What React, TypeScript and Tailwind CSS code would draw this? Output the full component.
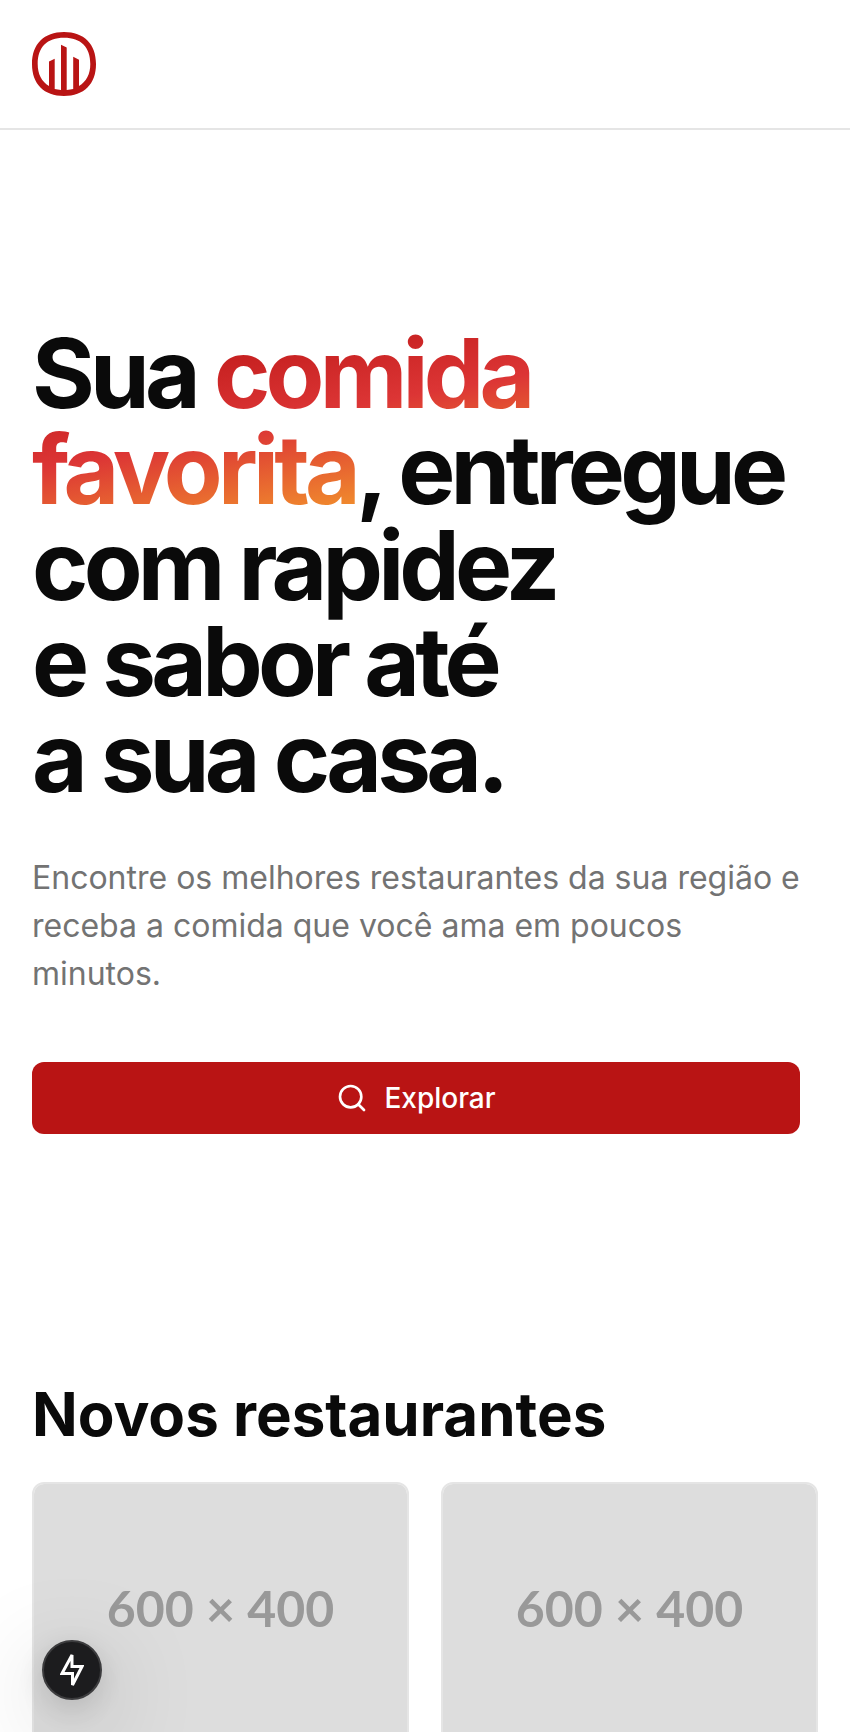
import { Search } from "lucide-react";

function Logo() {
  return (
    <svg viewBox="0 0 64 64" className="size-16" fill="#b91414" aria-hidden="true">
      <path
        fillRule="evenodd"
        d="M32 0C52 0 64 12 64 32S52 64 32 64 0 52 0 32 12 0 32 0ZM32 5.700C15 5.700 5.700 15 5.700 32C5.700 42 9.500 49.500 17 54V29.500L22.700 26.700V57Q25.500 57.700 29 57.900V12.700L34.700 15.500V57.900Q38.500 57.700 41.200 57V24.700L47 27.700V54C54.500 49.500 58.300 42 58.300 32C58.300 15 49 5.700 32 5.700Z"
      />
    </svg>
  );
}

function Bolt() {
  return (
    <svg viewBox="0 0 24 32" className="h-8 w-6" fill="none" stroke="#fff" strokeWidth="3" aria-hidden="true">
      <path d="M12 1V12.500H22L12.500 31V19.500H2L12 1Z" />
    </svg>
  );
}

function RestaurantCard() {
  return (
    <article className="overflow-hidden rounded-xl border-2 border-[#e5e5e5] pb-8">
      <div className="flex aspect-[3/2] items-center justify-center bg-[#ddd] font-['Lato',sans-serif] text-[50px] font-bold text-[#999]">
        600 × 400
      </div>
    </article>
  );
}

export default function App() {
  return (
    <div className="h-screen overflow-y-auto bg-white font-['Inter',sans-serif] text-[#0a0a0a] [scrollbar-width:none]">
      <header className="border-b-2 border-[#e5e5e5] px-8 py-8">
        <a href="#" aria-label="Início" className="block w-16">
          <Logo />
        </a>
      </header>
      <main className="px-8 pb-16">
        <section className="max-w-3xl pt-[195px] pb-61">
          <h1 className="text-8xl leading-none font-bold tracking-tighter">
            Sua{" "}
            <span className="bg-linear-to-br/srgb from-[#b91414] via-[#dc3535] to-[#f59e2b] bg-clip-text text-transparent">
              comida favorita
            </span>
            , entregue com rapidez
            <br />e sabor até
            <br />a sua casa.
          </h1>
          <p className="mt-[49px] text-[32px] leading-12 text-[#737373]">
            Encontre os melhores restaurantes da sua região e receba a comida que você ama em poucos minutos.
          </p>
          <button
            type="button"
            className="mt-16 flex h-18 w-full items-center justify-center gap-4 rounded-xl bg-[#b91414] text-[28px] leading-10 font-medium text-white"
          >
            <Search className="size-8" />
            Explorar
          </button>
        </section>
        <section>
          <h2 className="text-6xl leading-18 font-bold">Novos restaurantes</h2>
          <div className="mt-8 grid grid-cols-2 gap-8">
            <RestaurantCard />
            <RestaurantCard />
          </div>
        </section>
      </main>
      <button
        type="button"
        aria-label="Ferramentas"
        className="fixed bottom-8 left-[42px] flex size-15 items-center justify-center rounded-full border-2 border-[#3c3c3e] bg-[#1c1c1e] shadow-[0_8px_32px_rgba(0,0,0,0.14),0_24px_96px_rgba(0,0,0,0.25)]"
      >
        <Bolt />
      </button>
    </div>
  );
}
